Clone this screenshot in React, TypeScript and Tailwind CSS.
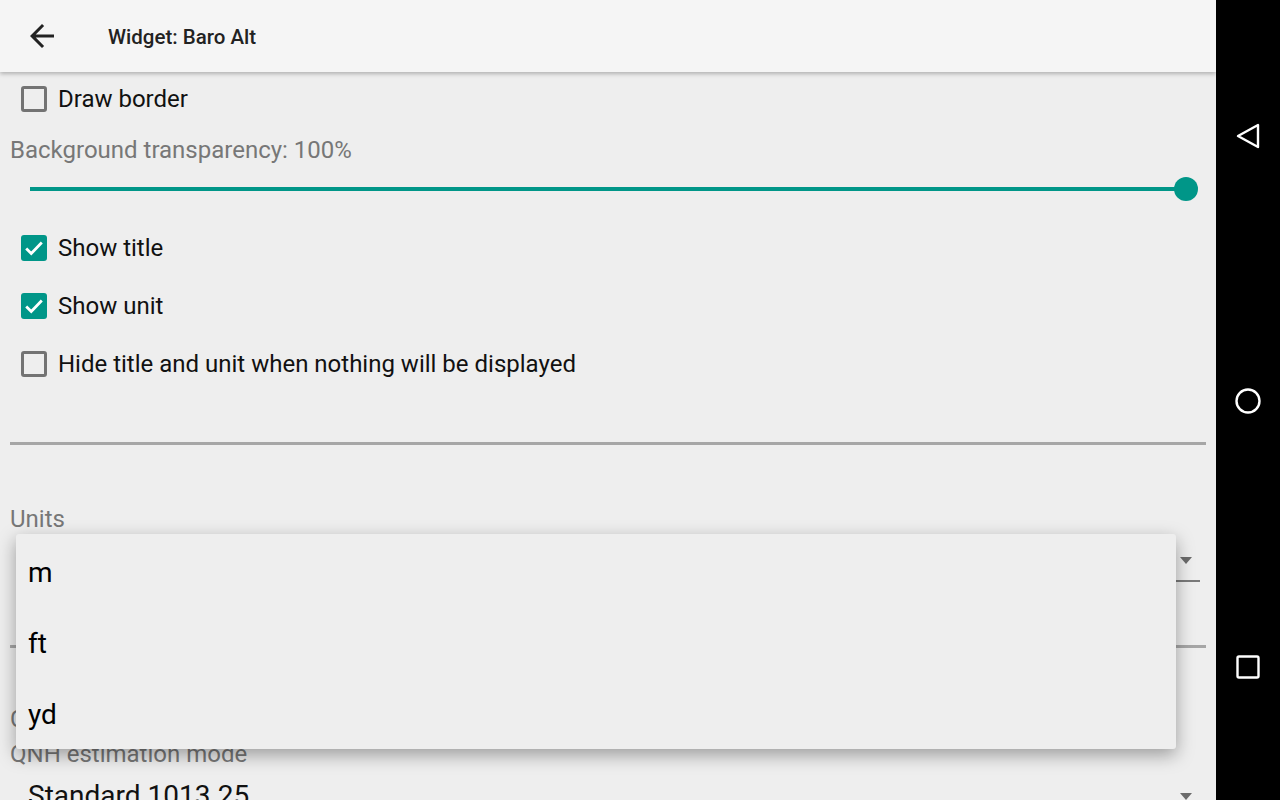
import React from 'react';

const font = { fontFamily: 'Roboto, "Noto Sans", sans-serif' };

const CheckBox = ({ checked }: { checked: boolean }) =>
  checked ? (
    <div className="w-[26px] h-[26px] rounded-[3px] bg-[#009688] flex items-center justify-center">
      <svg width="22" height="22" viewBox="0 0 24 24">
        <path d="M3.5 12.5l5.5 5.5 11.5-12" fill="none" stroke="#ffffff" strokeWidth="3" />
      </svg>
    </div>
  ) : (
    <div className="w-[26px] h-[26px] rounded-[3px] border-[3px] border-[#737373]" />
  );

const CheckRow = ({ label, checked, h }: { label: string; checked: boolean; h: string }) => (
  <div className={`flex items-center pl-[21px] gap-[11px] ${h}`}>
    <CheckBox checked={checked} />
    <span className="text-[24px] text-[#111111]">{label}</span>
  </div>
);

const Arrow = () => (
  <svg width="12" height="7" viewBox="0 0 12 7" className="mt-[6px]">
    <path d="M0 0h12L6 7z" fill="#6b6b6b" />
  </svg>
);

const App = () => {
  return (
    <div className="flex w-[1280px] h-[800px] overflow-hidden bg-black" style={font}>
      {/* settings screen */}
      <div className="w-[1216px] h-full flex flex-col bg-[#eeeeee]">
        <div className="relative z-10 h-[72px] shrink-0 bg-[#f5f5f5] shadow-[0_2px_4px_rgba(0,0,0,0.25)] flex items-center">
          <svg width="36" height="36" viewBox="0 0 24 24" className="ml-[24px]">
            <path d="M20 11H7.83l5.59-5.59L12 4l-8 8 8 8 1.41-1.41L7.83 13H20v-2z" fill="#222222" />
          </svg>
          <span className="ml-[48px] mt-[2px] text-[20.5px] font-medium text-[#222222]">Widget: Baro Alt</span>
        </div>

        <div className="relative flex-1 overflow-hidden">
          <CheckRow label="Draw border" checked={false} h="h-[53px] pt-[1px]" />

          <div className="h-[50px] flex items-center pl-[10px] text-[24px] text-[#777777]">
            Background transparency: 100%
          </div>
          <div className="h-6 mt-[2px] ml-[30px] w-[1168px] flex items-center">
            <div className="h-[4px] w-[1156px] bg-[#009688]" />
            <div className="w-6 h-6 -ml-3 rounded-full bg-[#009688]" />
          </div>

          <div className="mt-[18px]">
            <CheckRow label="Show title" checked h="h-[58px]" />
            <CheckRow label="Show unit" checked h="h-[58px]" />
            <CheckRow label="Hide title and unit when nothing will be displayed" checked={false} h="h-[58px]" />
          </div>

          <div className="mt-[49px] mx-[10px] h-[3px] bg-[#a6a6a6]" />

          <div className="mt-[59px] h-[30px] flex items-center pl-[10px] text-[24px] text-[#777777]">Units</div>
          <div className="h-[48px] ml-[28px] w-[1172px] border-b-[2px] border-[#7a7a7a] flex items-center justify-between pr-[8px]">
            <span className="text-[28px] text-[#111111]">m</span>
            <Arrow />
          </div>

          <div className="mt-[63px] mx-[10px] h-[3px] bg-[#a6a6a6]" />

          <div className="mt-[56px] h-[30px] flex items-center pl-[10px] text-[24px] text-[#777777]">Calibration</div>
          <div className="mt-[5px] h-[30px] flex items-center pl-[10px] text-[24px] text-[#777777]">
            QNH estimation mode
          </div>
          <div className="h-[48px] ml-[10px] w-[1190px] flex items-center justify-between pl-[18px] pr-[8px]">
            <span className="text-[28px] text-[#111111] mt-[6px]">Standard 1013.25</span>
            <Arrow />
          </div>

          {/* open spinner popup */}
          <div className="absolute left-[16px] top-[462px] w-[1160px] h-[215px] overflow-hidden rounded-[3px] bg-[#eeeeee] shadow-[0_6px_18px_rgba(0,0,0,0.35)] pt-[3px]">
            {['m', 'ft', 'yd'].map((u) => (
              <div key={u} className="h-[71px] flex items-center pl-[12px] text-[28px] text-[#000000]">
                {u}
              </div>
            ))}
          </div>
        </div>
      </div>

      {/* navigation bar */}
      <div className="w-16 h-full bg-black flex flex-col items-center justify-around pt-[3px]">
        <svg width="28" height="28" viewBox="0 0 28 28">
          <path d="M24 3v22L4 14z" fill="none" stroke="#ffffff" strokeWidth="2.4" strokeLinejoin="round" />
        </svg>
        <svg width="28" height="28" viewBox="0 0 28 28">
          <circle cx="14" cy="14" r="11.5" fill="none" stroke="#ffffff" strokeWidth="2.4" />
        </svg>
        <svg width="28" height="28" viewBox="0 0 28 28">
          <rect x="3.5" y="3.5" width="21" height="21" rx="1.5" fill="none" stroke="#ffffff" strokeWidth="2.4" />
        </svg>
      </div>
    </div>
  );
};

export default App;
